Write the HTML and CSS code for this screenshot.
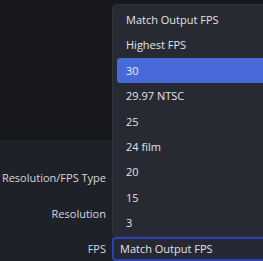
FILE: index.html
```html
<!DOCTYPE html>
<html lang="en">
  <head>
    <meta charset="UTF-8" />
    <title>Video Capture Device</title>
    <link rel="stylesheet" href="styles.css">
  </head>
  <body>
    <div class="preview"></div>

    <div class="form">
      <div class="form-row">
        <label>Resolution/FPS Type</label>
        <div class="field"></div>
      </div>
      <div class="form-row">
        <label>Resolution</label>
        <div class="field"></div>
      </div>
      <div class="form-row">
        <label>FPS</label>
        <div class="field">
          <div class="combo">Match Output FPS</div>
        </div>
      </div>
    </div>

    <!-- open dropdown list for the FPS combo -->
    <ul class="popup">
      <li>Match Output FPS</li>
      <li>Highest FPS</li>
      <li class="selected">30</li>
      <li>29.97 NTSC</li>
      <li>25</li>
      <li>24 film</li>
      <li>20</li>
      <li>15</li>
      <li>3</li>
    </ul>
  </body>
</html>
```

FILE: styles.css
```css
body {
  margin: 0;
  padding: 0;
  width: 263px;
  height: 261px;
  overflow: hidden;
  position: relative;
  background: #1f2128;
  font-family: "Open Sans", "DejaVu Sans", sans-serif;
  font-size: 11px;
  color: #e2e3e7;
}

.preview {
  height: 140px;
  background: #17181c;
}

.form {
  display: flex;
  flex-direction: column;
  gap: 13.5px;
  padding-top: 26.5px;
}

.form-row {
  display: flex;
  align-items: center;
  height: 22px;
}

.form-row label {
  flex: 0 0 106px;
  white-space: nowrap;
  text-align: right;
  color: #d6d7db;
}

.field {
  margin-left: 6px;
  flex: 1;
}

.combo {
  box-sizing: border-box;
  height: 24px;
  margin-top: 1.5px;
  padding: 0 0 1px 6px;
  display: flex;
  align-items: center;
  background: #262933;
  border: 2px solid #2741b6;
  border-right: none;
  border-radius: 4px 0 0 4px;
}

.popup {
  position: absolute;
  left: 112px;
  top: 4px;
  width: 151px;
  height: 233px;
  box-sizing: border-box;
  margin: 0;
  padding: 2px 0 2px 4px;
  list-style: none;
  background: #272a33;
  border: 1px solid #30333d;
  border-right: none;
  border-radius: 5px 0 0 5px;
}

.popup li {
  height: 25.375px;
  line-height: 25.375px;
  padding-left: 9px;
  border-radius: 3px 0 0 3px;
}

.popup li.selected {
  background: #486ad8;
  color: #eef0f6;
}
```
